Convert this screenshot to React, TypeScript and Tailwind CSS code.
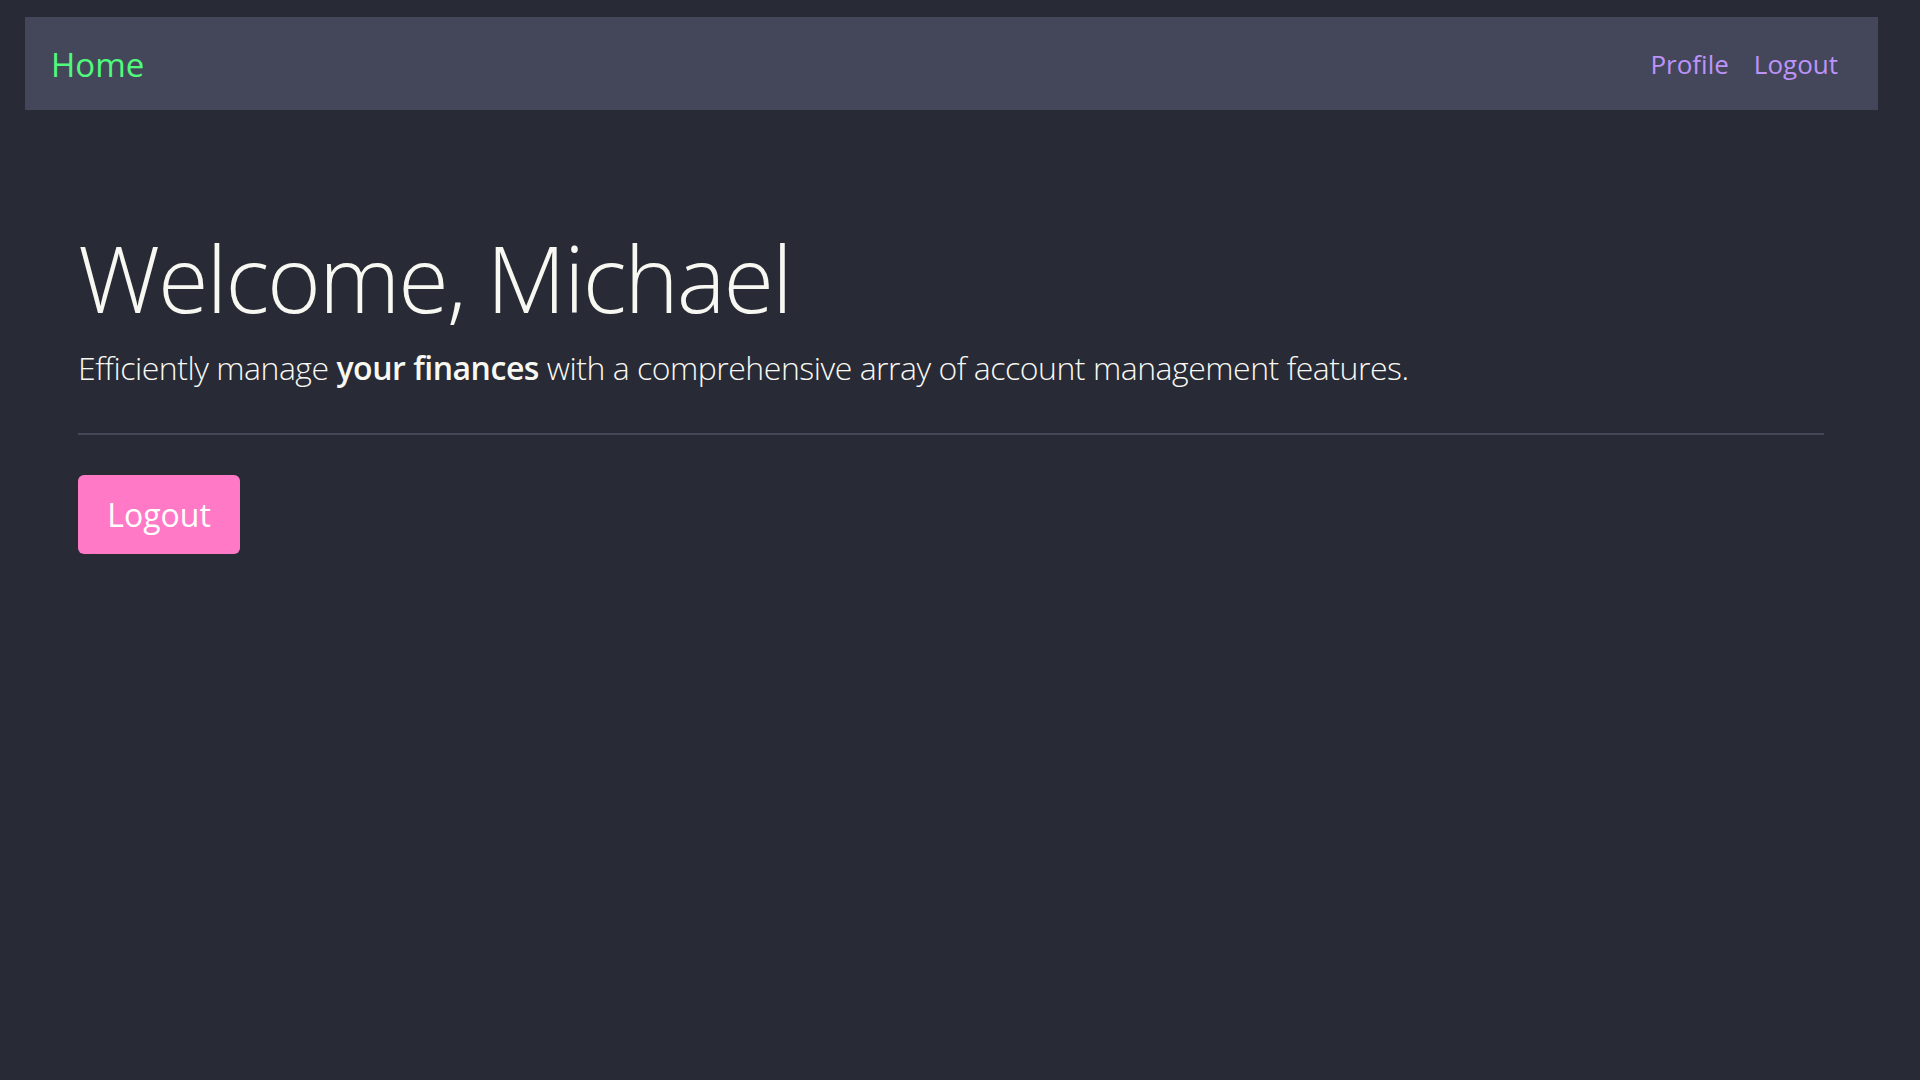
const NAV_LINKS = ['Profile', 'Logout'] as const;

export default function App() {
  return (
    <div
      className="min-h-screen w-full bg-[#282a36] pt-[17px] text-[#f8f8f2]"
      style={{ fontFamily: '"Open Sans", "Noto Sans", sans-serif' }}
    >
      {/* Navbar */}
      <nav className="ml-[25px] mr-[42px] flex h-[93px] items-center justify-between bg-[#44475a] pl-[26px] pr-[40px]">
        <a className="mt-[2px] text-[33px] leading-none text-[#50fa7b]">Home</a>
        <div className="flex items-center gap-[25px]">
          {NAV_LINKS.map((link) => (
            <a key={link} className="text-[26px] leading-none text-[#bd93f9]">
              {link}
            </a>
          ))}
        </div>
      </nav>

      {/* Jumbotron */}
      <main className="pl-[78px] pr-[96px] pt-[122px]">
        <h1 className="text-[92px] font-light leading-none tracking-[-2px]">Welcome, Michael</h1>
        <p className="mt-[28px] text-[32px] font-light leading-none tracking-[-0.48px]">
          Efficiently manage <span className="font-semibold">your finances</span> with a comprehensive
          array of account management features.
        </p>
        <hr className="mt-[49px] border-t-[2px] border-[#44475a]" />
        <button className="mt-[40px] flex h-[79px] w-[162px] items-center justify-center rounded-[6px] bg-[#ff79c6] text-[32px] leading-none text-white">
          Logout
        </button>
      </main>
    </div>
  );
}
